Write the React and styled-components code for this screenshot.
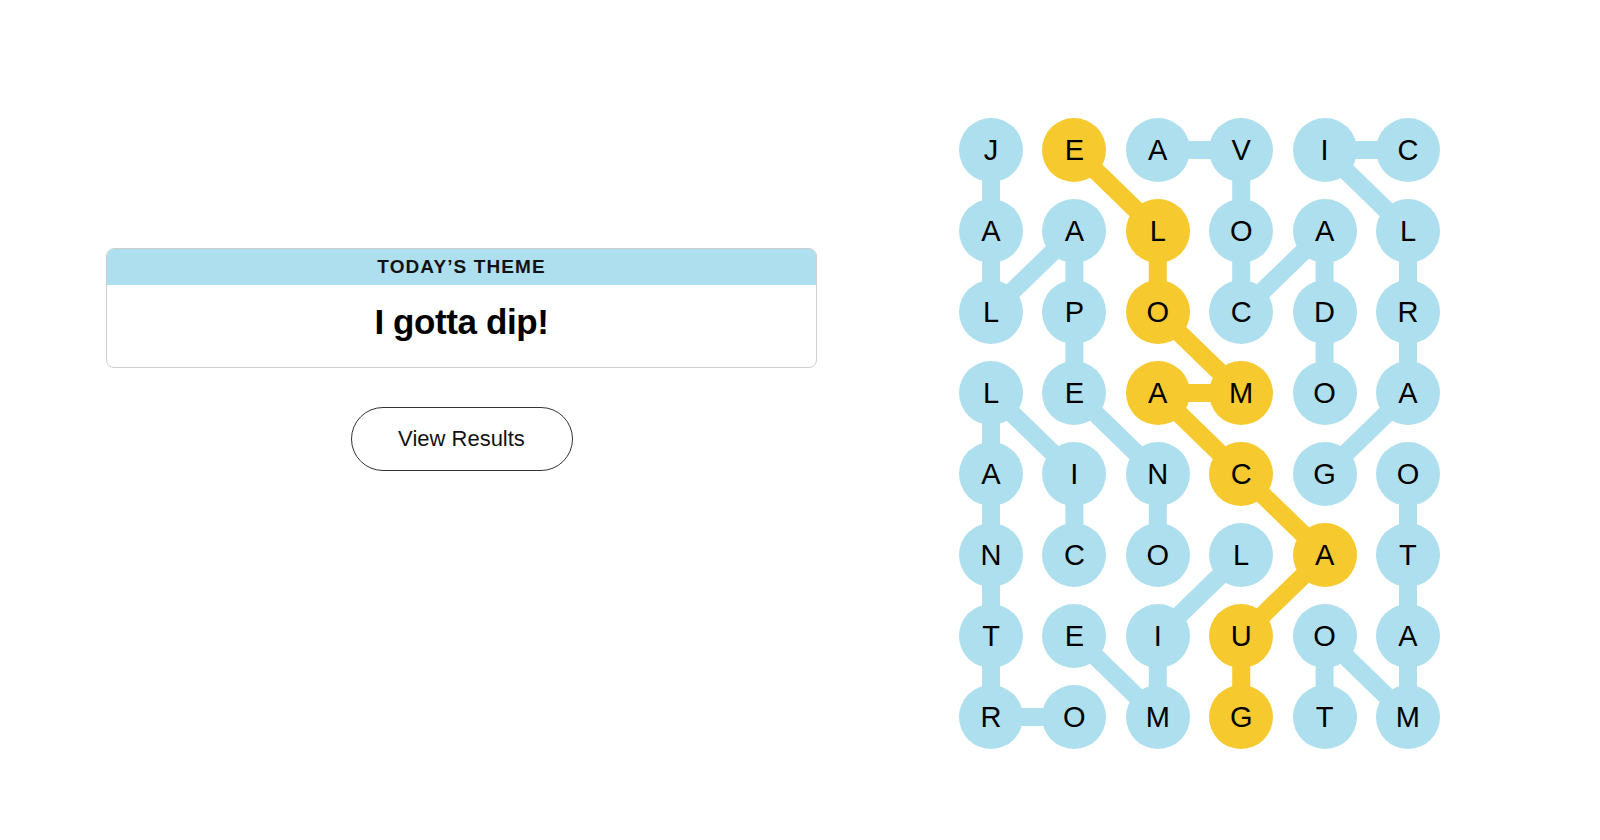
import React from 'react';
import styled, { createGlobalStyle } from 'styled-components';

const GlobalStyle = createGlobalStyle`
  html, body {
    margin: 0;
    padding: 0;
    background: #ffffff;
    font-family: 'Liberation Sans', Arial, sans-serif;
    color: #000;
  }
`;

// board geometry
const CELL = 64;
const GAP_X = 19.4;
const GAP_Y = 17;
const COLS = 6;
const ROWS = 8;
const BOARD_W = COLS * CELL + (COLS - 1) * GAP_X;
const BOARD_H = ROWS * CELL + (ROWS - 1) * GAP_Y;

const BLUE = '#aedfee';
const YELLOW = '#f6c92e';

const letters = [
  'JEAVIC',
  'AALOAL',
  'LPOCDR',
  'LEAMOA',
  'AINCGO',
  'NCOLAT',
  'TEIUOA',
  'ROMGTM',
];

// each word is a list of [row, col] in reading order
const words = [
  { name: 'JALAPENO', path: [[0, 0], [1, 0], [2, 0], [1, 1], [2, 1], [3, 1], [4, 2], [5, 2]] },
  { name: 'AVOCADO', path: [[0, 2], [0, 3], [1, 3], [2, 3], [1, 4], [2, 4], [3, 4]] },
  { name: 'GARLIC', path: [[4, 4], [3, 5], [2, 5], [1, 5], [0, 4], [0, 5]] },
  { name: 'CILANTRO', path: [[5, 1], [4, 1], [3, 0], [4, 0], [5, 0], [6, 0], [7, 0], [7, 1]] },
  { name: 'TOMATO', path: [[7, 4], [6, 4], [7, 5], [6, 5], [5, 5], [4, 5]] },
  { name: 'LIME', path: [[5, 3], [6, 2], [7, 2], [6, 1]] },
  {
    name: 'GUACAMOLE',
    spangram: true,
    path: [[7, 3], [6, 3], [5, 4], [4, 3], [3, 2], [3, 3], [2, 2], [1, 2], [0, 1]],
  },
];

const spangramCells = new Set(
  words.filter((w) => w.spangram).flatMap((w) => w.path.map(([r, c]) => `${r}-${c}`))
);

const cx = (c) => CELL / 2 + c * (CELL + GAP_X);
const cy = (r) => CELL / 2 + r * (CELL + GAP_Y);

const Page = styled.main`
  display: flex;
  align-items: flex-start;
  gap: 142px;
  width: 1600px;
  height: 840px;
  box-sizing: border-box;
  padding: 118px 0 0 106px;
  overflow: hidden;
`;

const LeftColumn = styled.section`
  display: flex;
  flex-direction: column;
  align-items: center;
  gap: 39px;
  width: 711px;
  margin-top: 130px;
`;

const ThemeCard = styled.div`
  width: 100%;
  border: 1px solid #cfcfcf;
  border-radius: 8px;
  overflow: hidden;
  box-sizing: border-box;
`;

const ThemeHeader = styled.div`
  height: 36px;
  display: flex;
  align-items: center;
  justify-content: center;
  background: ${BLUE};
  font-size: 19px;
  font-weight: 700;
  letter-spacing: 1.1px;
  color: #121212;
`;

const ThemeTitle = styled.h1`
  margin: 0;
  height: 82px;
  padding-bottom: 8px;
  box-sizing: border-box;
  display: flex;
  align-items: center;
  justify-content: center;
  font-size: 35px;
  font-weight: 700;
  letter-spacing: -0.4px;
  color: #000;
`;

const ResultsButton = styled.button`
  width: 222px;
  height: 64px;
  border: 1.5px solid #333;
  border-radius: 32px;
  background: #fff;
  font-family: 'Liberation Sans', Arial, sans-serif;
  font-size: 22px;
  color: #121212;
  cursor: pointer;
`;

const Board = styled.div`
  position: relative;
  width: ${BOARD_W}px;
  height: ${BOARD_H}px;
`;

const Links = styled.svg`
  position: absolute;
  inset: 0;
  overflow: visible;
`;

const LetterGrid = styled.div`
  position: relative;
  display: grid;
  grid-template-columns: repeat(${COLS}, ${CELL}px);
  grid-auto-rows: ${CELL}px;
  column-gap: ${GAP_X}px;
  row-gap: ${GAP_Y}px;
`;

const Letter = styled.div`
  width: ${CELL}px;
  height: ${CELL}px;
  border-radius: 50%;
  display: flex;
  align-items: center;
  justify-content: center;
  background: ${(p) => (p.$spangram ? YELLOW : BLUE)};
  font-size: 29px;
  font-weight: 400;
  color: #000;
  user-select: none;
`;

const App = () => (
  <>
    <GlobalStyle />
    <Page>
      <LeftColumn>
        <ThemeCard>
          <ThemeHeader>TODAY’S THEME</ThemeHeader>
          <ThemeTitle>I gotta dip!</ThemeTitle>
        </ThemeCard>
        <ResultsButton>View Results</ResultsButton>
      </LeftColumn>

      <Board>
        <Links width={BOARD_W} height={BOARD_H}>
          {words.map((w) => (
            <polyline
              key={w.name}
              points={w.path.map(([r, c]) => `${cx(c)},${cy(r)}`).join(' ')}
              fill="none"
              stroke={w.spangram ? YELLOW : BLUE}
              strokeWidth="18"
              strokeLinejoin="round"
            />
          ))}
        </Links>
        <LetterGrid>
          {letters.flatMap((row, r) =>
            row.split('').map((ch, c) => (
              <Letter key={`${r}-${c}`} $spangram={spangramCells.has(`${r}-${c}`)}>
                {ch}
              </Letter>
            ))
          )}
        </LetterGrid>
      </Board>
    </Page>
  </>
);

export default App;
